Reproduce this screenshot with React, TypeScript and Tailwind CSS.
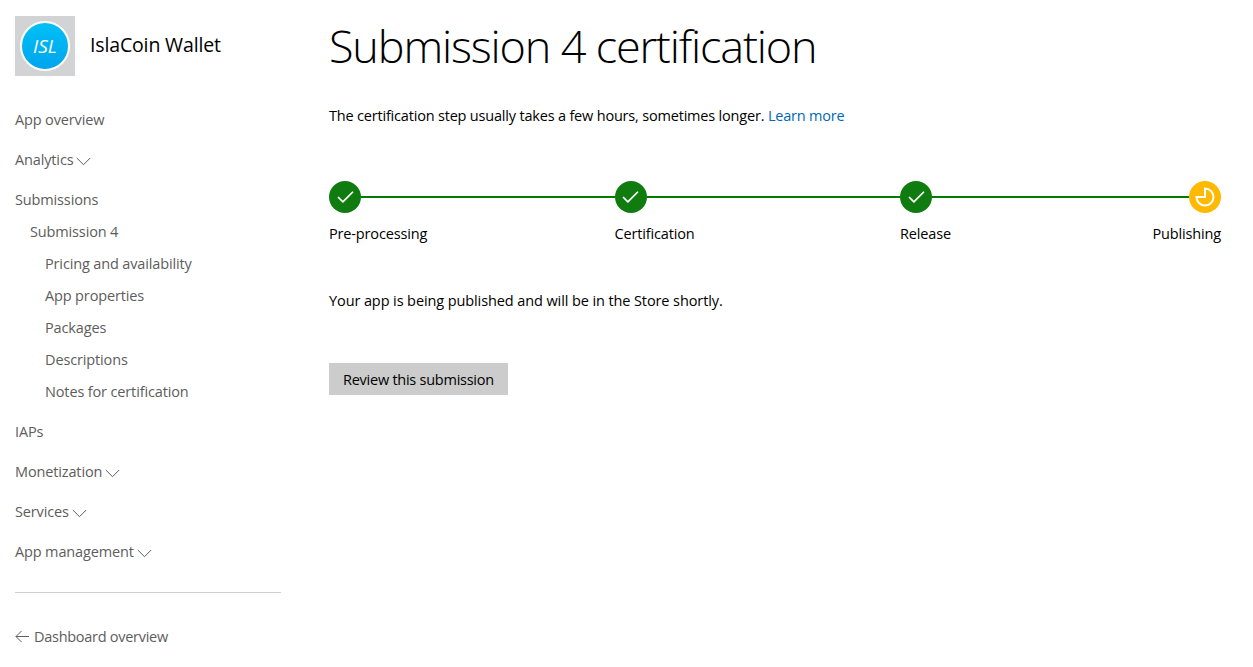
import { Check } from 'lucide-react'

const font = "font-['Open_Sans','Noto_Sans',sans-serif]"

function Chevron() {
  return (
    <svg width="15" height="9" viewBox="0 0 15 9" fill="none" stroke="#5d5d5d" strokeWidth="1" className="mt-[2px]">
      <path d="M0.8 1 L7.5 7.7 L14.2 1" />
    </svg>
  )
}

function NavItem({ label, indent = 0, top = false, chevron = false }: { label: string; indent?: number; top?: boolean; chevron?: boolean }) {
  const pad = indent === 2 ? 'pl-[30px]' : indent === 1 ? 'pl-[15px]' : ''
  return (
    <div className={`flex h-8 items-center gap-[3px] ${pad} ${top ? 'mt-2' : ''}`}>
      <span className="text-[14.5px] tracking-[-0.14px] text-[#5d5d5d]">{label}</span>
      {chevron && <Chevron />}
    </div>
  )
}

function Step({ label }: { label: string }) {
  return (
    <div className="w-[285.5px] shrink-0">
      <div className="flex items-center">
        <div className="flex h-8 w-8 shrink-0 items-center justify-center rounded-full bg-[#107c10]">
          <Check size={21} strokeWidth={2} className="text-white" />
        </div>
        <div className="h-[2px] flex-1 bg-[#007c00]" />
      </div>
      <div className="mt-[11px] text-[14.5px] leading-5 tracking-[-0.15px] text-black">{label}</div>
    </div>
  )
}

export default function App() {
  return (
    <div className={`flex h-[667px] w-[1253px] overflow-hidden bg-white ${font}`}>
      <aside className="ml-[15px] w-[266px] shrink-0 pt-4">
        <div className="flex items-center gap-[15px]">
          <div className="flex h-[60px] w-[60px] items-center justify-center bg-[#d2d3d5]">
            <div className="flex h-[50px] w-[50px] items-center justify-center rounded-full border-2 border-white bg-gradient-to-b from-[#00c0f5] to-[#00a4ee]">
              <span className="text-[19px] italic text-white">ISL</span>
            </div>
          </div>
          <span className="-mt-[2px] text-[19.5px] tracking-[-0.15px] text-black">IslaCoin Wallet</span>
        </div>
        <nav className="mt-7">
          <NavItem label="App overview" />
          <NavItem label="Analytics" chevron top />
          <NavItem label="Submissions" top />
          <NavItem label="Submission 4" indent={1} />
          <NavItem label="Pricing and availability" indent={2} />
          <NavItem label="App properties" indent={2} />
          <NavItem label="Packages" indent={2} />
          <NavItem label="Descriptions" indent={2} />
          <NavItem label="Notes for certification" indent={2} />
          <NavItem label="IAPs" top />
          <NavItem label="Monetization" chevron top />
          <NavItem label="Services" chevron top />
          <NavItem label="App management" chevron top />
        </nav>
        <div className="mt-6 border-t border-[#d0d0d0]" />
        <div className="mt-[33px] flex items-center gap-[5px]">
          <svg width="14" height="13" viewBox="0 0 14 13" fill="none" stroke="#5d5d5d" strokeWidth="1">
            <path d="M14 6.5 H1 M6.5 1 L1 6.5 L6.5 12" />
          </svg>
          <span className="text-[14.5px] tracking-[-0.28px] text-[#5d5d5d]">Dashboard overview</span>
        </div>
      </aside>
      <main className="ml-[48px] w-[892px] shrink-0">
        <h1 className="mt-[15px] text-[45px] leading-[62px] font-light tracking-[-1.17px] text-black">Submission 4 certification</h1>
        <p className="mt-[29px] text-[14.5px] leading-5 tracking-[-0.19px] text-black">
          The certification step usually takes a few hours, sometimes longer. <span className="text-[#0067b8]">Learn more</span>
        </p>
        <div className="mt-[55px] flex items-start">
          <Step label="Pre-processing" />
          <Step label="Certification" />
          <Step label="Release" />
          <div className="min-w-0 flex-1">
            <div className="flex items-center">
              <div className="h-[2px] flex-1 bg-[#007c00]" />
              <div className="flex h-8 w-8 shrink-0 items-center justify-center rounded-full bg-[#ffb900]">
                <svg width="24" height="24" viewBox="0 0 24 24" fill="none" stroke="white" strokeWidth="2">
                  <path d="M12 3.5a8.5 8.5 0 1 1-8.5 8.5H12z" />
                </svg>
              </div>
            </div>
          </div>
        </div>
        <div className="-mt-[20px] text-right text-[14.5px] leading-5 tracking-[-0.15px] text-black">Publishing</div>
        <p className="mt-[47px] text-[14.5px] leading-5 tracking-[-0.1px] text-black">Your app is being published and will be in the Store shortly.</p>
        <button className="mt-[52px] flex h-8 items-center bg-[#cccccc] px-[14px] pt-[2px] text-[14.5px] tracking-[-0.25px] text-black">Review this submission</button>
      </main>
    </div>
  )
}
